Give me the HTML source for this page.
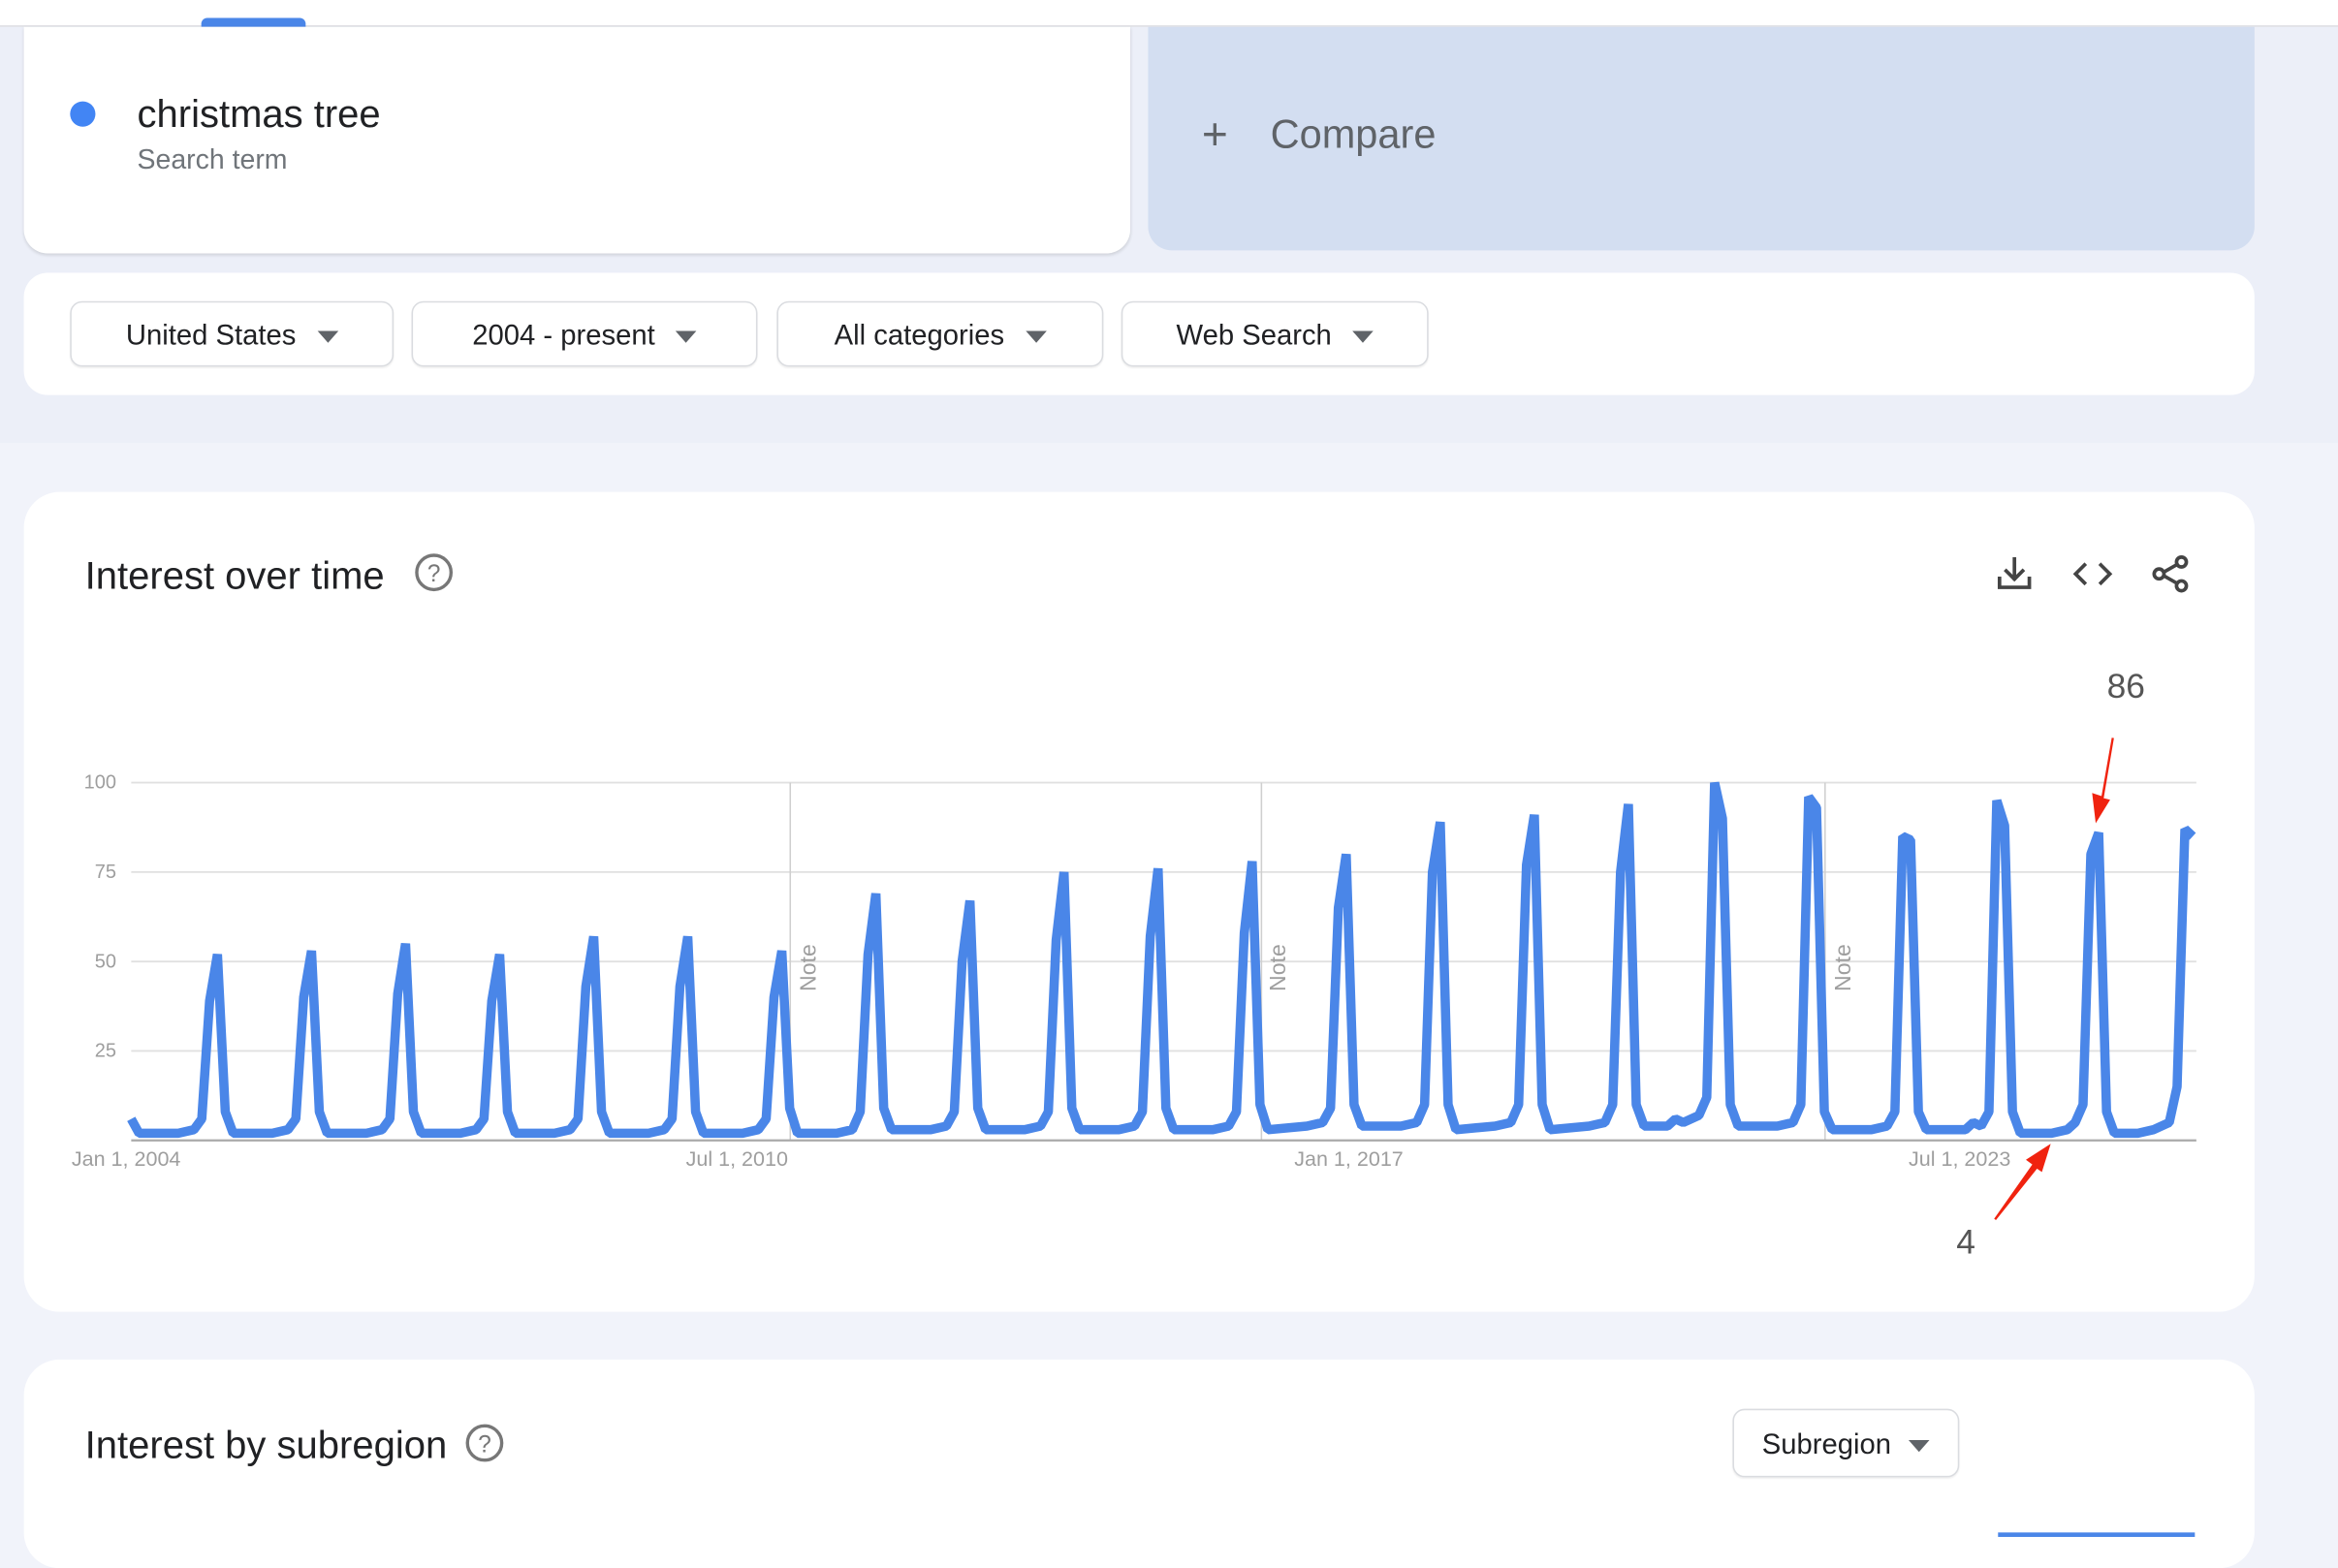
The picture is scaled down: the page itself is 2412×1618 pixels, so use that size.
<!DOCTYPE html>
<html><head><meta charset="utf-8">
<style>
html,body{margin:0;padding:0;width:2412px;height:1586px;overflow:hidden;background:#f1f3fa;font-family:"Liberation Sans",Arial,sans-serif}
#w{position:absolute;left:0;top:0;width:1568px;height:1031px;transform:scale(1.538265);transform-origin:0 0;background:#f1f3fa}
.abs{position:absolute}
.card{position:absolute;background:#fff}
.btn{position:absolute;top:202px;height:44px;padding-top:3px;border:1px solid #dadce0;border-radius:8px;box-sizing:border-box;box-shadow:0 1px 1px rgba(0,0,0,.06);font-size:19px;color:#202124;display:flex;align-items:center;justify-content:center;gap:14px;background:#fff}
.tri{width:0;height:0;border-left:7px solid transparent;border-right:7px solid transparent;border-top:8px solid #5f6368}
.ttl{position:absolute;font-size:26px;color:#202124}
.ylab{position:absolute;font-size:13px;color:#9e9e9e;text-align:right;width:40px}
.xlab{position:absolute;font-size:14px;color:#9e9e9e;top:769px}
.note{position:absolute;font-size:15px;color:#9e9e9e;transform:rotate(-90deg);transform-origin:0 0}
</style></head><body>
<div id="w">
<div class="abs" style="left:0;top:0;width:1568px;height:297px;background:#eceff8"></div>
<div class="abs" style="left:0;top:0;width:1568px;height:17px;background:#fff;border-bottom:1px solid #dcdde2"></div>
<div class="abs" style="left:135px;top:12px;width:70px;height:6px;background:#4a86e8;border-radius:4px 4px 0 0"></div>

<div class="card" style="left:16px;top:18px;width:742px;height:152px;border-radius:0 0 16px 16px;box-shadow:0 1px 2px rgba(0,0,0,.12)"></div>
<div class="abs" style="left:47px;top:68px;width:17px;height:17px;border-radius:50%;background:#4285f4"></div>
<div class="abs" style="left:92px;top:61px;font-size:26px;color:#202124">christmas tree</div>
<div class="abs" style="left:92px;top:96px;font-size:18.5px;color:#70757a">Search term</div>

<div class="abs" style="left:770px;top:18px;width:742px;height:150px;background:#d3def1;border-radius:0 0 16px 16px"></div>
<div class="abs" style="left:806px;top:76px;font-size:30px;color:#5f6368;line-height:30px">+</div>
<div class="abs" style="left:852px;top:75px;font-size:27px;color:#5f6368">Compare</div>

<div class="card" style="left:16px;top:183px;width:1496px;height:82px;border-radius:16px"></div>
<div class="btn" style="left:47px;width:217px">United States<span class="tri"></span></div>
<div class="btn" style="left:276px;width:232px">2004 - present<span class="tri"></span></div>
<div class="btn" style="left:521px;width:219px">All categories<span class="tri"></span></div>
<div class="btn" style="left:752px;width:206px">Web Search<span class="tri"></span></div>

<div class="card" style="left:16px;top:330px;width:1496px;height:550px;border-radius:24px"></div>
<div class="ttl" style="left:57px;top:371px">Interest over time</div>
<svg class="abs" style="left:277px;top:370px" width="28" height="28" viewBox="0 0 28 28"><circle cx="14" cy="14" r="11.5" fill="none" stroke="#777" stroke-width="2.2"/><text x="14" y="20" font-size="16" text-anchor="middle" fill="#777" font-family="Liberation Sans">?</text></svg>

<svg class="abs" style="left:0;top:0" width="1568" height="1031">
<g fill="none" stroke="#444" stroke-width="2.4" stroke-linecap="square">
<path d="M1341 388v6h20v-6"/><path d="M1351 375v13"/><path d="M1345.5 383l5.5 5.5 5.5-5.5"/>
<path d="M1398 379l-6 6 6 6"/><path d="M1409 379l6 6-6 6"/>
<path d="M1449 385l14-8M1449 385l14 8"/>
<path d="M1341 971v6h20v-6"/><path d="M1351 958v13"/><path d="M1345.5 966l5.5 5.5 5.5-5.5"/>
<path d="M1398 962l-6 6 6 6"/><path d="M1409 962l6 6-6 6"/>
<path d="M1449 968l14-8M1449 968l14 8"/>
</g>
<g fill="#fff" stroke="#444" stroke-width="2.4"><circle cx="1463" cy="377" r="3.3"/><circle cx="1448" cy="385" r="3.3"/><circle cx="1463" cy="393" r="3.3"/><circle cx="1463" cy="960" r="3.3"/><circle cx="1448" cy="968" r="3.3"/><circle cx="1463" cy="976" r="3.3"/></g>
<g stroke="#e0e0e0" stroke-width="1.2">
<line x1="88" y1="525" x2="1473" y2="525"/><line x1="88" y1="585" x2="1473" y2="585"/><line x1="88" y1="645" x2="1473" y2="645"/><line x1="88" y1="705" x2="1473" y2="705"/>
</g>
<g stroke="#cfcfcf" stroke-width="1"><line x1="530" y1="525" x2="530" y2="765"/><line x1="846" y1="525" x2="846" y2="765"/><line x1="1224" y1="525" x2="1224" y2="765"/></g>
<line x1="88" y1="765" x2="1473" y2="765" stroke="#aaa" stroke-width="1.5"/>
<g transform="translate(88,765) scale(5.257,-2.4)">
<path vector-effect="non-scaling-stroke" fill="none" stroke="#4a86e8" stroke-width="6.2" stroke-linejoin="bevel" d="M0,6 L1,2 6,2 8,3 9,6 10,39 11,52 12,8 13,2 18,2 20,3 21,6 22,40 23,53 24,8 25,2 30,2 32,3 33,6 34,41 35,55 36,8 37,2 42,2 44,3 45,6 46,39 47,52 48,8 49,2 54,2 56,3 57,6 58,43 59,57 60,8 61,2 66,2 68,3 69,6 70,43 71,57 72,8 73,2 78,2 80,3 81,6 82,40 83,53 84,9 85,2 90,2 92,3 93,8 94,52 95,69 96,9 97,3 102,3 104,4 105,8 106,50 107,67 108,9 109,3 114,3 116,4 117,8 118,56 119,75 120,9 121,3 126,3 128,4 129,8 130,57 131,76 132,9 133,3 138,3 140,4 141,8 142,58 143,78 144,10 145,3 150,4 152,5 153,9 154,65 155,80 156,10 157,4 162,4 164,5 165,10 166,75 167,89 168,10 169,3 174,4 176,5 177,10 178,77 179,91 180,10 181,3 186,4 188,5 189,10 190,75 191,94 192,10 193,4 196,4 197,6 198,5 200,7 201,12 202,100 203,90 204,10 205,4 210,4 212,5 213,10 214,96 215,93 216,8 217,3 222,3 224,4 225,8 226,85 227,84 228,8 229,3 234,3 235,5 236,4 237,8 238,95 239,88 240,8 241,2 245,2 247,3 248,5 249,10 250,80 251,86 252,8 253,2 256,2 258,3 260,5 261,15 262,87 263,85"/>
</g>
<path d="M1417 495 L1410 535 L1404 533 L1406 550 L1414 537 L1410 536 Z" fill="#f0230f" stroke="#f0230f" stroke-width="1.5"/>
<path d="M1338 818 L1364 781 L1360 778 L1374 769 L1369 785 L1366 783 Z" fill="#f0230f" stroke="#f0230f" stroke-width="1.5"/>
</svg>
<div class="ylab" style="left:38px;top:517px">100</div>
<div class="ylab" style="left:38px;top:577px">75</div>
<div class="ylab" style="left:38px;top:637px">50</div>
<div class="ylab" style="left:38px;top:697px">25</div>
<div class="xlab" style="left:48px">Jan 1, 2004</div>
<div class="xlab" style="left:460px">Jul 1, 2010</div>
<div class="xlab" style="left:868px">Jan 1, 2017</div>
<div class="xlab" style="left:1280px">Jul 1, 2023</div>
<div class="note" style="left:534px;top:665px">Note</div>
<div class="note" style="left:849px;top:665px">Note</div>
<div class="note" style="left:1228px;top:665px">Note</div>
<div class="abs" style="left:1413px;top:447px;font-size:23px;color:#555">86</div>
<div class="abs" style="left:1312px;top:820px;font-size:23px;color:#555">4</div>

<div class="card" style="left:16px;top:912px;width:1496px;height:140px;border-radius:24px"></div>
<div class="ttl" style="left:57px;top:954px">Interest by subregion</div>
<svg class="abs" style="left:311px;top:954px" width="28" height="28" viewBox="0 0 28 28"><circle cx="14" cy="14" r="11.5" fill="none" stroke="#777" stroke-width="2.2"/><text x="14" y="20" font-size="16" text-anchor="middle" fill="#777" font-family="Liberation Sans">?</text></svg>
<div class="btn" style="left:1162px;top:945px;width:152px;height:46px;gap:12px">Subregion<span class="tri"></span></div>
<div class="abs" style="left:1340px;top:1028px;width:132px;height:3px;background:#4a86e8"></div>
</div>
</body></html>
